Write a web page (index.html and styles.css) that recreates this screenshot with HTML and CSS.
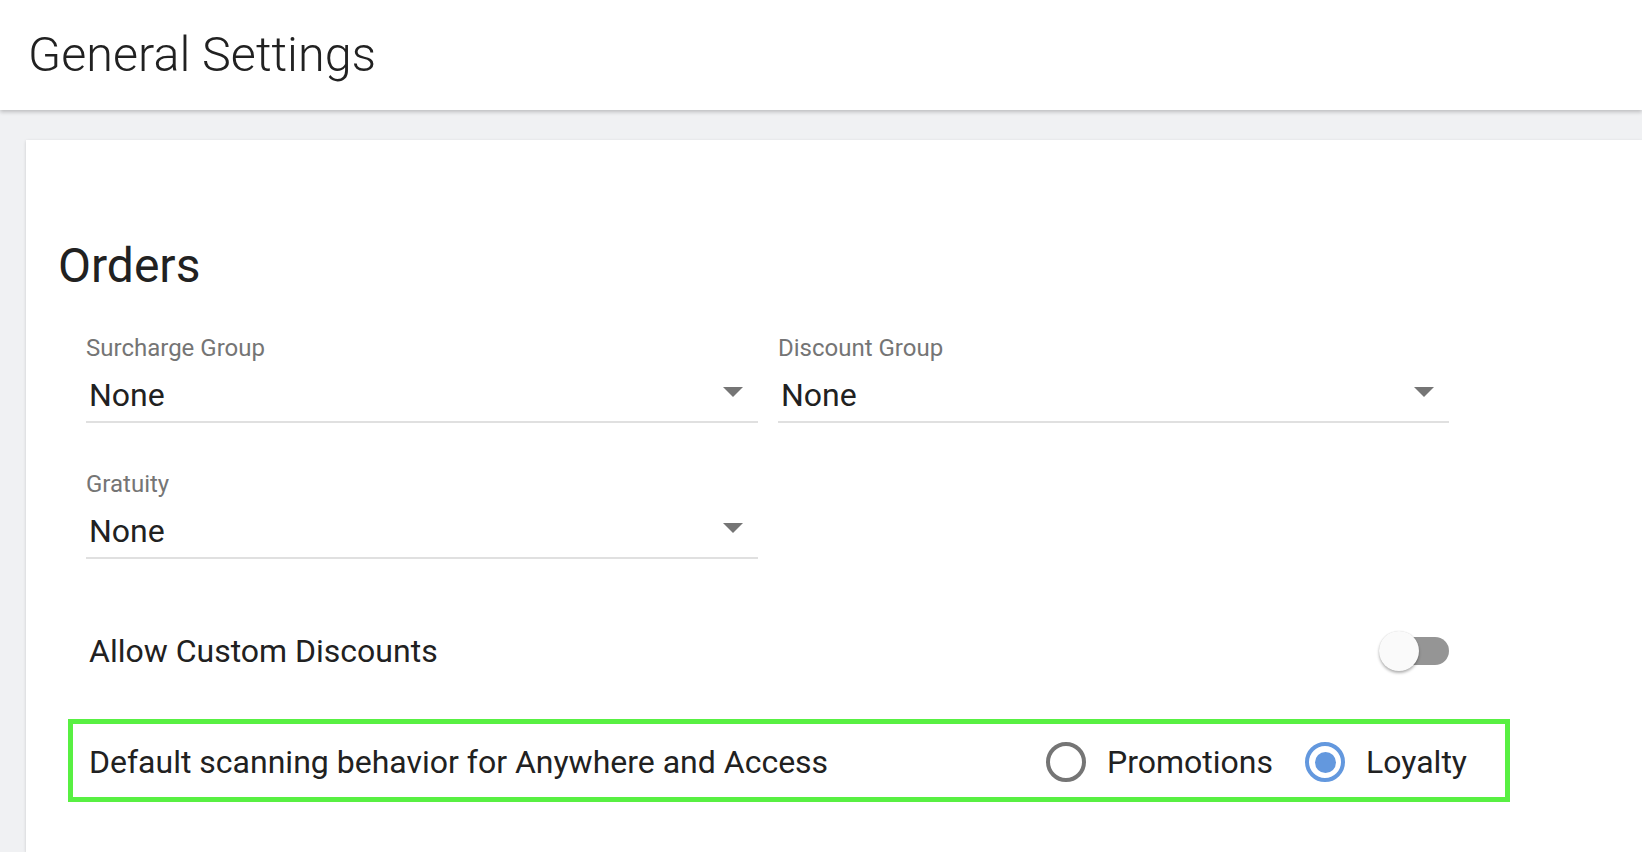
FILE: index.html
```html
<!DOCTYPE html>
<html lang="en">
<head>
<meta charset="utf-8">
<title>General Settings</title>
<link rel="stylesheet" href="styles.css">
</head>
<body>
<header class="topbar">
  <h1 class="page-title">General Settings</h1>
</header>
<main class="content">
  <section class="card">
    <h2 class="section-title">Orders</h2>
    <div class="fields">
      <div class="field">
        <div class="field-label">Surcharge Group</div>
        <div class="field-select">
          <span class="field-value">None</span>
          <span class="caret"></span>
        </div>
      </div>
      <div class="field">
        <div class="field-label">Discount Group</div>
        <div class="field-select">
          <span class="field-value">None</span>
          <span class="caret"></span>
        </div>
      </div>
      <div class="field">
        <div class="field-label">Gratuity</div>
        <div class="field-select">
          <span class="field-value">None</span>
          <span class="caret"></span>
        </div>
      </div>
    </div>
    <div class="toggle-row">
      <span class="row-text">Allow Custom Discounts</span>
      <span class="switch"><span class="switch-track"></span><span class="switch-thumb"></span></span>
    </div>
    <div class="scan-row">
      <span class="row-text">Default scanning behavior for Anywhere and Access</span>
      <div class="radios">
        <label class="radio"><span class="radio-ring"></span><span class="radio-text">Promotions</span></label>
        <label class="radio checked"><span class="radio-ring"><span class="radio-dot"></span></span><span class="radio-text">Loyalty</span></label>
      </div>
    </div>
  </section>
</main>
</body>
</html>
```
FILE: styles.css
```css
html, body {
  margin: 0;
  padding: 0;
}
body {
  background: #f0f1f3;
  font-family: Roboto, "Liberation Sans", Arial, sans-serif;
  color: #212121;
  overflow: hidden;
  height: 852px;
}
.topbar {
  position: relative;
  z-index: 2;
  background: #ffffff;
  height: 110px;
  box-sizing: border-box;
  padding: 27px 0 0 28px;
  box-shadow: 0 2px 4px rgba(0, 0, 0, 0.22);
}
.page-title {
  margin: 0;
  font-family: "Roboto Light", Roboto, "Liberation Sans", sans-serif;
  font-size: 48.5px;
  line-height: 56px;
  font-weight: 300;
  color: #212121;
}
.content {
  padding: 30px 0 0 26px;
}
.card {
  background: #ffffff;
  height: 712px;
  box-sizing: border-box;
  padding: 98px 0 0 32px;
  box-shadow: 0 1px 3px rgba(0, 0, 0, 0.16);
}
.section-title {
  margin: 0;
  font-size: 48px;
  line-height: 56px;
  font-weight: 400;
  color: #212121;
}
.fields {
  margin: 40px 0 0 28px;
  display: grid;
  grid-template-columns: 672px 671px;
  column-gap: 20px;
  row-gap: 47px;
  width: 1363px;
}
.field-label {
  font-size: 24px;
  line-height: 28px;
  color: #757575;
}
.field-select {
  margin-top: 14px;
  display: flex;
  align-items: flex-start;
  justify-content: space-between;
  padding: 0 15px 7px 3px;
  border-bottom: 2px solid #e0e0e0;
}
.field-value {
  font-size: 32px;
  line-height: 38px;
  color: #212121;
}
.caret {
  margin-top: 11px;
  width: 0;
  height: 0;
  border-left: 10px solid transparent;
  border-right: 10px solid transparent;
  border-top: 10px solid #757575;
}
.toggle-row {
  margin: 72px 0 0 28px;
  width: 1363px;
  height: 40px;
  display: flex;
  align-items: center;
  justify-content: space-between;
}
.row-text {
  font-size: 32px;
  line-height: 38px;
  padding-left: 3px;
  color: #212121;
}
.switch {
  position: relative;
  width: 70px;
  height: 40px;
}
.switch-track {
  position: absolute;
  left: 2px;
  right: 0;
  top: 6px;
  height: 28px;
  border-radius: 14px;
  background: #959595;
}
.switch-thumb {
  position: absolute;
  left: 0;
  top: 0;
  width: 40px;
  height: 40px;
  border-radius: 50%;
  background: #fafafa;
  box-shadow: 0 2px 3px rgba(0, 0, 0, 0.3), 0 0 1px rgba(0, 0, 0, 0.15);
}
.scan-row {
  margin: 48px 0 0 10px;
  width: 1442px;
  box-sizing: border-box;
  border: 5px solid #58f042;
  padding: 18px 38px 15px 13px;
  display: flex;
  align-items: center;
  justify-content: space-between;
}
.radios {
  display: flex;
  align-items: center;
  gap: 32px;
}
.radio {
  display: flex;
  align-items: center;
  gap: 21px;
}
.radio-ring {
  width: 40px;
  height: 40px;
  box-sizing: border-box;
  border: 4.5px solid #757575;
  border-radius: 50%;
  display: flex;
  align-items: center;
  justify-content: center;
}
.radio.checked .radio-ring {
  border-color: #6398de;
}
.radio-dot {
  width: 21px;
  height: 21px;
  border-radius: 50%;
  background: #6398de;
}
.radio-text {
  font-size: 32px;
  line-height: 38px;
  color: #212121;
}
```
